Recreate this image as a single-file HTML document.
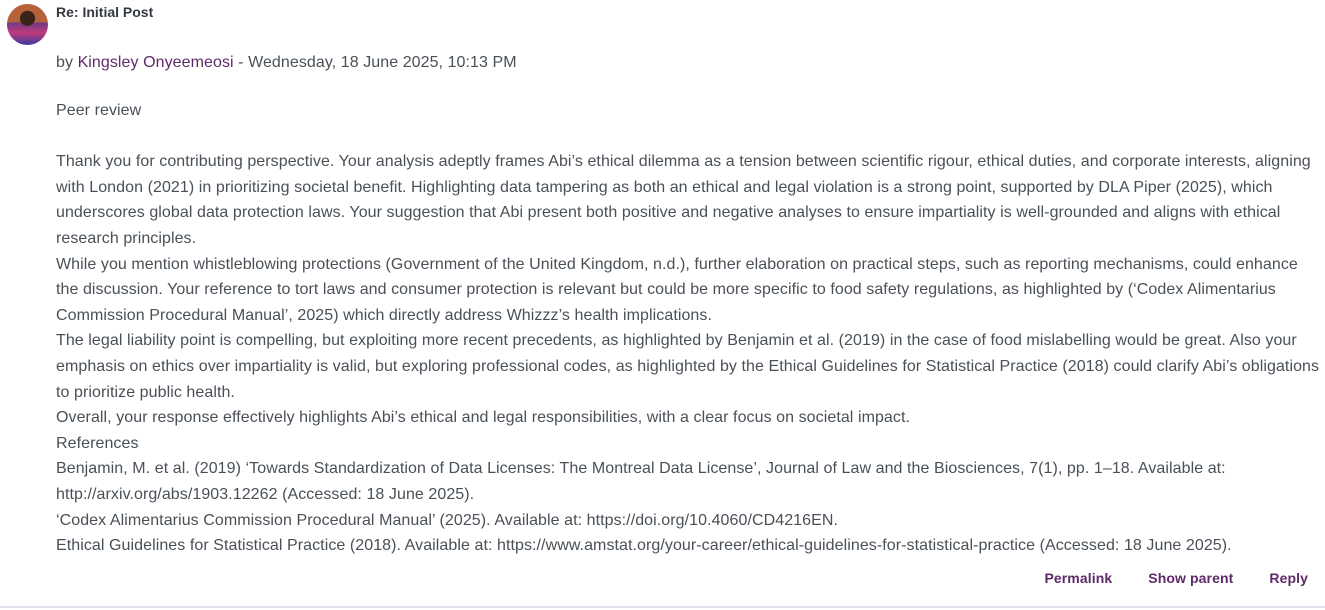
<!DOCTYPE html>
<html><head><style>
body{margin:0;width:1325px;height:610px;overflow:hidden;background:#fff;font-family:"Liberation Sans",sans-serif;color:#495057;font-size:16px;}
.av{position:absolute;left:7px;top:4px;width:41px;height:41px;border-radius:50%;background:radial-gradient(circle at 50% 35%,#3a2418 0 22%,transparent 23%),linear-gradient(180deg,#b5623a 0 45%,#6a3a8a 45%,#c03a7a 70%,#3a3aa0 100%);}
.title{position:absolute;left:56px;top:4px;font-weight:bold;font-size:14px;color:#343a40;}
.by{position:absolute;left:56px;top:53px;line-height:20px;letter-spacing:0.07px}
a{color:#5f2a6a;text-decoration:none}
.body{position:absolute;left:56px;top:98px;width:1266px;line-height:25.6px;letter-spacing:0.07px}
.body p{margin:0}
.links{position:absolute;top:570px;right:17px;font-weight:bold;font-size:14px;letter-spacing:0.1px}
.links a{margin-left:36px;color:#5f2a6a}
.line{position:absolute;left:0;right:0;top:606px;height:2px;background:#dee2ec}
</style></head><body>
<div class="av"></div>
<div class="title">Re: Initial Post</div>
<div class="by">by <a>Kingsley Onyeemeosi</a> - Wednesday, 18 June 2025, 10:13 PM</div>
<div class="body">
<p>Peer review</p>
<p>&nbsp;</p>
<p>Thank you for contributing perspective. Your analysis adeptly frames Abi’s ethical dilemma as a tension between scientific rigour, ethical duties, and corporate interests, aligning with London (2021) in prioritizing societal benefit. Highlighting data tampering as both an ethical and legal violation is a strong point, supported by DLA Piper (2025), which underscores global data protection laws. Your suggestion that Abi present both positive and negative analyses to ensure impartiality is well-grounded and aligns with ethical research principles.</p>
<p>While you mention whistleblowing protections (Government of the United Kingdom, n.d.), further elaboration on practical steps, such as reporting mechanisms, could enhance<br>the discussion. Your reference to tort laws and consumer protection is relevant but could be more specific to food safety regulations, as highlighted by (‘Codex Alimentarius Commission Procedural Manual’, 2025) which directly address Whizzz’s health implications.</p>
<p>The legal liability point is compelling, but exploiting more recent precedents, as highlighted by Benjamin et al. (2019) in the case of food mislabelling would be great. Also your emphasis on ethics over impartiality is valid, but exploring professional codes, as highlighted by the Ethical Guidelines for Statistical Practice (2018) could clarify Abi’s obligations to prioritize public health.</p>
<p>Overall, your response effectively highlights Abi’s ethical and legal responsibilities, with a clear focus on societal impact.</p>
<p>References</p>
<p>Benjamin, M. et al. (2019) ‘Towards Standardization of Data Licenses: The Montreal Data License’, Journal of Law and the Biosciences, 7(1), pp. 1–18. Available at: http://arxiv.org/abs/1903.12262 (Accessed: 18 June 2025).</p>
<p>‘Codex Alimentarius Commission Procedural Manual’ (2025). Available at: https://doi.org/10.4060/CD4216EN.</p>
<p>Ethical Guidelines for Statistical Practice (2018). Available at: https://www.amstat.org/your-career/ethical-guidelines-for-statistical-practice (Accessed: 18 June 2025).</p>
</div>
<div class="links"><a>Permalink</a><a>Show parent</a><a>Reply</a></div>
<div class="line"></div>
</body></html>
